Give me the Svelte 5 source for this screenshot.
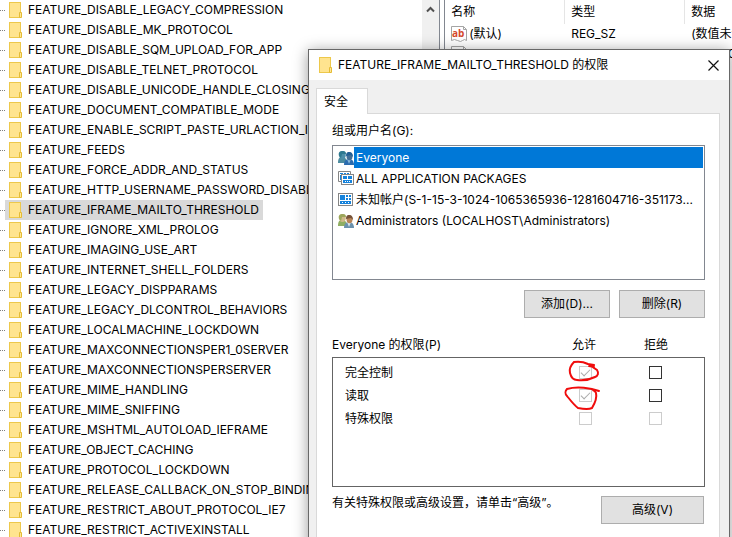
<script lang="ts">
  let selected = $state("FEATURE_IFRAME_MAILTO_THRESHOLD");
  let activeGroup = $state("Everyone");

  const keys = [
    "FEATURE_DISABLE_LEGACY_COMPRESSION",
    "FEATURE_DISABLE_MK_PROTOCOL",
    "FEATURE_DISABLE_SQM_UPLOAD_FOR_APP",
    "FEATURE_DISABLE_TELNET_PROTOCOL",
    "FEATURE_DISABLE_UNICODE_HANDLE_CLOSING",
    "FEATURE_DOCUMENT_COMPATIBLE_MODE",
    "FEATURE_ENABLE_SCRIPT_PASTE_URLACTION_IF_",
    "FEATURE_FEEDS",
    "FEATURE_FORCE_ADDR_AND_STATUS",
    "FEATURE_HTTP_USERNAME_PASSWORD_DISABLE",
    "FEATURE_IFRAME_MAILTO_THRESHOLD",
    "FEATURE_IGNORE_XML_PROLOG",
    "FEATURE_IMAGING_USE_ART",
    "FEATURE_INTERNET_SHELL_FOLDERS",
    "FEATURE_LEGACY_DISPPARAMS",
    "FEATURE_LEGACY_DLCONTROL_BEHAVIORS",
    "FEATURE_LOCALMACHINE_LOCKDOWN",
    "FEATURE_MAXCONNECTIONSPER1_0SERVER",
    "FEATURE_MAXCONNECTIONSPERSERVER",
    "FEATURE_MIME_HANDLING",
    "FEATURE_MIME_SNIFFING",
    "FEATURE_MSHTML_AUTOLOAD_IEFRAME",
    "FEATURE_OBJECT_CACHING",
    "FEATURE_PROTOCOL_LOCKDOWN",
    "FEATURE_RELEASE_CALLBACK_ON_STOP_BINDING",
    "FEATURE_RESTRICT_ABOUT_PROTOCOL_IE7",
    "FEATURE_RESTRICT_ACTIVEXINSTALL",
  ];

  const values = [
    { name: "(默认)", type: "REG_SZ", data: "(数值未设置)" },
    { name: "", type: "", data: "0x00000001" },
  ];

  const groups = [
    { name: "Everyone", icon: "people" },
    { name: "ALL APPLICATION PACKAGES", icon: "packages" },
    { name: "未知帐户(S-1-15-3-1024-1065365936-1281604716-351173...", icon: "package" },
    { name: "Administrators (LOCALHOST\\Administrators)", icon: "people" },
  ];

  let permissions = $state([
    { name: "完全控制", allow: true, deny: false, locked: false, marked: 1 },
    { name: "读取", allow: true, deny: false, locked: false, marked: 2 },
    { name: "特殊权限", allow: false, deny: false, locked: true, marked: 0 },
  ]);
</script>

{#snippet folder()}
  <svg class="folder" width="14" height="16" viewBox="0 0 14 16">
    <rect x="0.5" y="0.5" width="11" height="15" fill="#ffe48f" stroke="#edc84b" />
    <path d="M10.5 15.5v-5h2v5z" fill="#ffe794" stroke="#e5bb35" />
  </svg>
{/snippet}

{#snippet groupIcon(kind: string, active: boolean)}
  <svg width="16" height="16" viewBox="0 0 16 16">
    {#if kind == "people"}
      <path d="M0 13c0-4 1-6 4-6 3 0 5 2 5 6z" fill={active ? "#4c8ca0" : "#8fae62"} />
      <ellipse cx="4.5" cy="5" rx="3.3" ry="4" fill={active ? "#4d8fa9" : "#cfb989"} />
      <path d="M1 6c-1-4 1-5 4-5 2 0 3 1 3 3L4 4 3 8z" fill={active ? "#2e7990" : "#9ca65b"} />
      <path d="M6 15c0-4 2-6 5-6 3 0 5 2 5 6z" fill={active ? "#2c6cae" : "#6a91ad"} />
      <path d="M9 9l2 5 2-5z" fill={active ? "#8ab8d8" : "#dae3e8"} />
      <ellipse cx="11.500" cy="6.500" rx="3" ry="3.800" fill={active ? "#426f96" : "#b98557"} />
      <path d="M8 6c0-4 2-4 3-4 3 0 4 2 4 5l-2-2z" fill={active ? "#235f94" : "#765238"} />
    {:else if kind == "packages"}
      <path d="M3 10.500H.5V.5h12V3" fill="#fff" stroke="#858585" />
      <path d="M2 2h3v1H2zM6 2h2v1H6zM9 2h2v1H9zM2 4h1v5H2z" fill="#1683dc" />
      <rect x="3.500" y="3.500" width="12" height="10" fill="#fff" stroke="#858585" />
      <rect x="5" y="5" width="9" height="7" fill="#1683dc" />
      <path d="M5 8.500h9M9.500 5v3M7 10.500h1M9 10.500h1M11 10.500h1" stroke="#fff" />
    {:else}
      <rect x="0.5" y="1.5" width="14" height="12" fill="#fff" stroke="#858585" />
      <rect x="2" y="3" width="11" height="9" fill="#1683dc" />
      <path d="M2 8.500h11M7.500 3v5M10.500 3v5M8 5.500h5M4 10.500h1M7 10.500h1M10 10.500h1" stroke="#fff" />
    {/if}
  </svg>
{/snippet}

<div class="regedit">
  <nav class="tree">
    <ul>
      {#each keys as key}
        <li>
          <span class="dots"></span>
          <button class="key" class:selected={selected == key} onclick={() => (selected = key)}>
            {@render folder()}
            {key}
          </button>
        </li>
      {/each}
    </ul>
    <button class="scroll" aria-label="Scroll up">
      <svg width="9" height="7" viewBox="0 0 9 7">
        <path d="M1 5.500l3.500-3.500L8 5.500" fill="none" stroke="#505050" stroke-width="2" />
      </svg>
    </button>
  </nav>

  <div class="pane">
    <table class="values">
      <thead>
        <tr><th>名称</th><th>类型</th><th>数据</th></tr>
      </thead>
      <tbody>
        {#each values as value}
          <tr>
            <td>
              <span class="value">
                <svg width="16" height="16" viewBox="0 0 16 16">
                  <path
                    d="M.5.500h12l3 3v11l-2-1-2 1-2 1-3-1-3-1-3 1z"
                    fill="#fff"
                    stroke="#a5a5a5"
                  />
                  <path d="M12.500.500v3h3" fill="none" stroke="#a5a5a5" />
                  <text x="1" y="11">ab</text>
                </svg>
                {value.name}
              </span>
            </td>
            <td>{value.type}</td>
            <td>{value.data}</td>
          </tr>
        {/each}
      </tbody>
    </table>
  </div>

  <section class="dialog">
    <header>
      {@render folder()}
      <h1>FEATURE_IFRAME_MAILTO_THRESHOLD 的权限</h1>
      <button class="close" aria-label="Close">
        <svg width="11" height="11" viewBox="0 0 11 11">
          <path d="M.5.500l10 10M10.500.500l-10 10" stroke="#111" stroke-width="1.200" />
        </svg>
      </button>
    </header>

    <div class="content">
      <button class="tab">安全</button>
      <div class="panel">
        <p id="groups">组或用户名(G):</p>
        <ul class="groups" aria-labelledby="groups">
          {#each groups as group}
            <li>
              {@render groupIcon(group.icon, activeGroup == group.name)}
              <button
                class:active={activeGroup == group.name}
                onclick={() => (activeGroup = group.name)}>{group.name}</button
              >
            </li>
          {/each}
        </ul>

        <div class="actions">
          <button class="push">添加(D)...</button>
          <button class="push">删除(R)</button>
        </div>

        <div class="columns">
          <span>Everyone 的权限(P)</span>
          <span>允许</span>
          <span>拒绝</span>
        </div>
        <table class="permissions">
          <tbody>
            {#each permissions as perm}
              <tr>
                <th>{perm.name}</th>
                <td>
                  <input
                    type="checkbox"
                    aria-label="{perm.name} 允许"
                    bind:checked={perm.allow}
                    disabled
                  />
                  {#if perm.marked == 1}
                    <svg class="mark" width="38" height="26" viewBox="0 0 38 26">
                      <path
                        d="M24 7l5 1M29 6l-6-1C19 3 15 2 9 3 6 6 4 10 5 14c1 4 3 7 7 7 7 1 14-1 18-3 3-1 4-4 2-7-3-2-6-4-9-6"
                      />
                    </svg>
                  {:else if perm.marked == 2}
                    <svg class="mark" width="38" height="28" viewBox="0 0 38 28">
                      <path
                        d="M34 9C26 6 12 4 2 7 0 9 0 12 2 14c4 5 7 9 11 12 5 1 10 2 14 0 3-5 5-11 4-15-1-2-2-2-3-3"
                      />
                    </svg>
                  {/if}
                </td>
                <td>
                  <input
                    type="checkbox"
                    aria-label="{perm.name} 拒绝"
                    bind:checked={perm.deny}
                    disabled={perm.locked}
                  />
                </td>
              </tr>
            {/each}
          </tbody>
        </table>

        <div class="advanced">
          <p>有关特殊权限或高级设置，请单击“高级”。</p>
          <button class="push wide">高级(V)</button>
        </div>
      </div>
    </div>
  </section>
</div>

<style>
  :global(body) {
    margin: 0;
  }

  .regedit {
    position: relative;
    display: flex;
    height: 100vh;
    overflow: hidden;
    background: #fff;
    color: #000;
    font: 12px/20px Inter, "Noto Sans CJK SC", sans-serif;
  }

  button {
    margin: 0;
    padding: 0;
    border: 0;
    background: none;
    color: inherit;
    font: inherit;
  }

  svg {
    flex: none;
    overflow: visible;
  }

  ul,
  p,
  h1 {
    margin: 0;
    padding: 0;
    list-style: none;
    font: inherit;
  }

  .tree {
    display: flex;
    flex: 0 0 60%;
    border-right: 1px solid #828790;
  }

  .tree ul {
    flex: 1;
    overflow: hidden;
  }

  .tree li {
    display: flex;
    align-items: center;
    height: 20px;
    white-space: nowrap;
  }

  .dots {
    width: 5px;
    border-top: 1px dotted #808080;
  }

  .key {
    display: flex;
    align-items: center;
    gap: 5px;
    height: 20px;
    padding: 0 4px;
  }

  .key.selected {
    background: #d9d9d9;
  }

  .scroll {
    display: flex;
    justify-content: center;
    width: 17px;
    padding-top: 6px;
    background: #f0f0f0;
  }

  .pane {
    flex: 1;
    min-width: 0;
    margin-left: 4px;
    overflow: hidden;
    border-left: 1px solid #828790;
  }

  .values {
    width: 360px;
    border-spacing: 0;
    table-layout: fixed;
    white-space: nowrap;
  }

  .values th,
  .values td {
    height: 20px;
    padding: 0 6px;
    font-weight: normal;
    text-align: left;
  }

  .values th {
    height: 24px;
    border-right: 1px solid #e5e5e5;
  }

  .value {
    display: flex;
    align-items: center;
    gap: 2px;
  }

  .value text {
    fill: #d4482b;
    font: bold 10px "Open Sans", sans-serif;
  }

  .dialog {
    position: absolute;
    top: 49px;
    right: 2px;
    bottom: -20px;
    left: 308px;
    display: flex;
    flex-direction: column;
    border: 1px solid #686868;
    background: #f0f0f0;
    box-shadow: 0 2px 14px rgba(0, 0, 0, 0.4);
  }

  .dialog header {
    display: flex;
    align-items: center;
    height: 30px;
    padding: 0 10px;
    background: #fff;
  }

  .dialog h1 {
    flex: 1;
    padding-left: 5px;
  }

  .close {
    display: flex;
  }

  .content {
    display: flex;
    flex: 1;
    flex-direction: column;
    align-items: flex-start;
    padding: 8px 9px 0 7px;
  }

  .tab {
    position: relative;
    height: 26px;
    width: 52px;
    padding-right: 12px;
    margin-bottom: -1px;
    border: 1px solid #d9d9d9;
    border-bottom: 0;
    background: #fff;
  }

  .panel {
    box-sizing: border-box;
    flex: 1;
    width: 100%;
    padding: 7px 14px 0 15px;
    border: 1px solid #d9d9d9;
    background: #fff;
  }

  .groups {
    box-sizing: border-box;
    height: 135px;
    margin-top: 4px;
    padding: 1px;
    border: 1px solid #828790;
  }

  .groups li {
    display: flex;
    align-items: center;
    height: 21px;
    padding-left: 4px;
  }

  .groups button {
    flex: 1;
    min-width: 0;
    height: 21px;
    padding: 0 2px;
    overflow: hidden;
    text-align: left;
    text-overflow: ellipsis;
    white-space: nowrap;
  }

  .groups .active {
    background: #0078d7;
    color: #fff;
  }

  .actions {
    display: flex;
    justify-content: flex-end;
    gap: 9px;
    margin-top: 10px;
  }

  .push {
    box-sizing: border-box;
    width: 86px;
    height: 28px;
    border: 1px solid #adadad;
    background: #e1e1e1;
  }

  .push.wide {
    width: 103px;
  }

  .columns {
    display: grid;
    grid-template-columns: 1fr 72px 72px;
    margin-top: 17px;
    padding-right: 13px;
    text-align: center;
  }

  .columns span:first-child {
    text-align: left;
  }

  .permissions {
    display: block;
    box-sizing: border-box;
    height: 130px;
    margin-top: 2px;
    padding: 3px 14px 0 12px;
    border: 1px solid #646464;
  }

  .permissions tbody,
  .permissions tr {
    display: grid;
  }

  .permissions tr {
    grid-template-columns: 1fr 70px 70px;
    align-items: center;
    height: 23px;
  }

  .permissions th {
    padding: 0;
    font-weight: normal;
    text-align: left;
  }

  .permissions td {
    position: relative;
    display: flex;
    justify-content: center;
    padding: 0;
  }

  .mark {
    position: absolute;
    top: -7px;
    left: 15px;
    fill: none;
    stroke: #f00c0c;
    stroke-width: 2;
    stroke-linecap: round;
    pointer-events: none;
  }

  input {
    appearance: none;
    box-sizing: border-box;
    width: 13px;
    height: 13px;
    margin: 0;
    border: 1px solid #333;
    background: #fff;
  }

  input:disabled {
    border-color: #ccc;
  }

  input:checked::before {
    content: "";
    display: block;
    width: 8px;
    height: 4px;
    margin: 2px 0 0 1px;
    border: solid #aaa;
    border-width: 0 0 1px 1px;
    transform: rotate(-45deg);
  }

  .advanced {
    display: flex;
    justify-content: space-between;
    margin-top: 9px;
    padding-right: 1px;
  }

  .advanced p {
    margin-top: -3px;
  }
</style>
